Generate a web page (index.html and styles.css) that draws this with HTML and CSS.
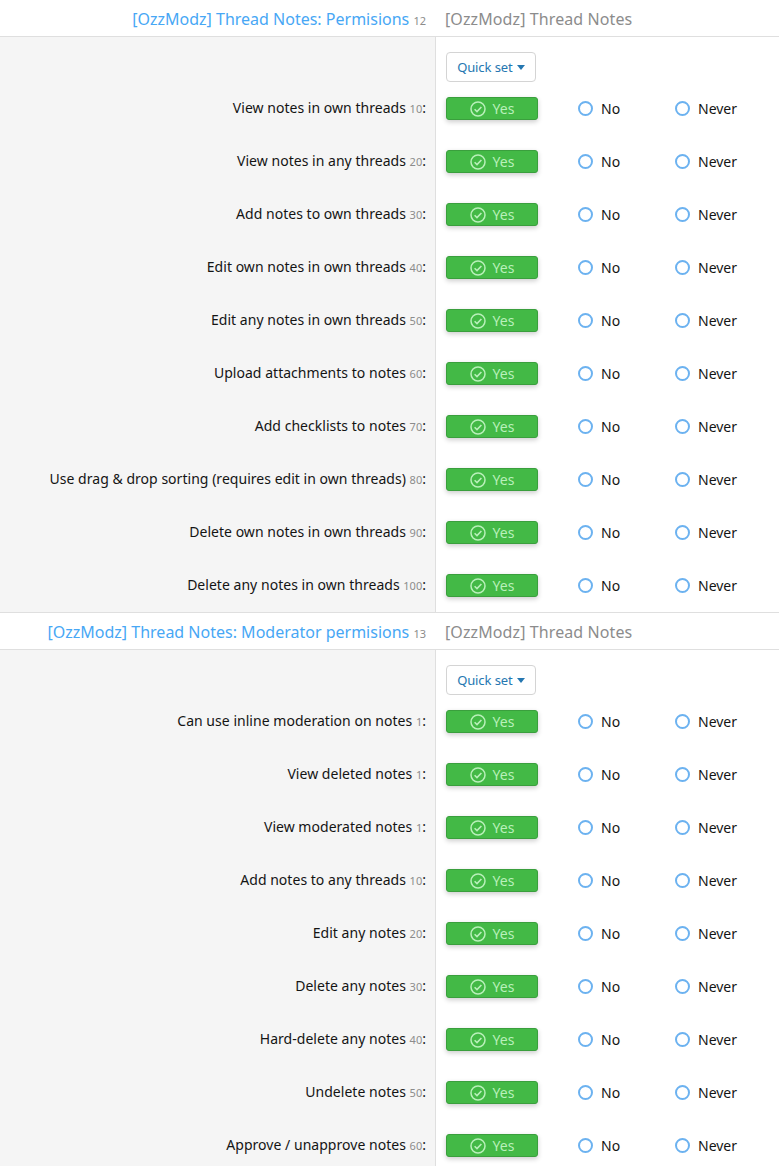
FILE: index.html
```html
<!DOCTYPE html>
<html lang="en">
<head>
<meta charset="UTF-8">
<title>Permissions</title>
<link rel="stylesheet" href="styles.css">
</head>
<body>
<svg class="sprite" width="0" height="0">
    <symbol id="check" viewBox="0 0 16 16">
        <circle cx="8" cy="8" r="7" fill="none" stroke="currentColor" stroke-width="1.5"/>
        <path d="M4.6 8.2l2.4 2.4 4.4-4.6" fill="none" stroke="currentColor" stroke-width="1.6"/>
    </symbol>
</svg>

<div class="head">
    <div class="head-title">[OzzModz] Thread Notes: Permisions <span class="count">12</span></div>
    <div class="head-addon">[OzzModz] Thread Notes</div>
</div>
<div class="section">
    <div class="quick-row"><div class="side"></div><div class="main"><button class="quick">Quick set <i class="caret"></i></button></div></div>
    <div class="row"><div class="side">View notes in own threads <span class="count">10</span>:</div><div class="main"><span class="yes"><svg class="check"><use href="#check"/></svg>Yes</span><span class="opt"><i class="radio"></i>No</span><span class="opt"><i class="radio"></i>Never</span></div></div>
    <div class="row"><div class="side">View notes in any threads <span class="count">20</span>:</div><div class="main"><span class="yes"><svg class="check"><use href="#check"/></svg>Yes</span><span class="opt"><i class="radio"></i>No</span><span class="opt"><i class="radio"></i>Never</span></div></div>
    <div class="row"><div class="side">Add notes to own threads <span class="count">30</span>:</div><div class="main"><span class="yes"><svg class="check"><use href="#check"/></svg>Yes</span><span class="opt"><i class="radio"></i>No</span><span class="opt"><i class="radio"></i>Never</span></div></div>
    <div class="row"><div class="side">Edit own notes in own threads <span class="count">40</span>:</div><div class="main"><span class="yes"><svg class="check"><use href="#check"/></svg>Yes</span><span class="opt"><i class="radio"></i>No</span><span class="opt"><i class="radio"></i>Never</span></div></div>
    <div class="row"><div class="side">Edit any notes in own threads <span class="count">50</span>:</div><div class="main"><span class="yes"><svg class="check"><use href="#check"/></svg>Yes</span><span class="opt"><i class="radio"></i>No</span><span class="opt"><i class="radio"></i>Never</span></div></div>
    <div class="row"><div class="side">Upload attachments to notes <span class="count">60</span>:</div><div class="main"><span class="yes"><svg class="check"><use href="#check"/></svg>Yes</span><span class="opt"><i class="radio"></i>No</span><span class="opt"><i class="radio"></i>Never</span></div></div>
    <div class="row"><div class="side">Add checklists to notes <span class="count">70</span>:</div><div class="main"><span class="yes"><svg class="check"><use href="#check"/></svg>Yes</span><span class="opt"><i class="radio"></i>No</span><span class="opt"><i class="radio"></i>Never</span></div></div>
    <div class="row"><div class="side">Use drag &amp; drop sorting (requires edit in own threads) <span class="count">80</span>:</div><div class="main"><span class="yes"><svg class="check"><use href="#check"/></svg>Yes</span><span class="opt"><i class="radio"></i>No</span><span class="opt"><i class="radio"></i>Never</span></div></div>
    <div class="row"><div class="side">Delete own notes in own threads <span class="count">90</span>:</div><div class="main"><span class="yes"><svg class="check"><use href="#check"/></svg>Yes</span><span class="opt"><i class="radio"></i>No</span><span class="opt"><i class="radio"></i>Never</span></div></div>
    <div class="row"><div class="side">Delete any notes in own threads <span class="count">100</span>:</div><div class="main"><span class="yes"><svg class="check"><use href="#check"/></svg>Yes</span><span class="opt"><i class="radio"></i>No</span><span class="opt"><i class="radio"></i>Never</span></div></div>
</div>

<div class="head head-next">
    <div class="head-title">[OzzModz] Thread Notes: Moderator permisions <span class="count">13</span></div>
    <div class="head-addon">[OzzModz] Thread Notes</div>
</div>
<div class="section">
    <div class="quick-row"><div class="side"></div><div class="main"><button class="quick">Quick set <i class="caret"></i></button></div></div>
    <div class="row"><div class="side">Can use inline moderation on notes <span class="count">1</span>:</div><div class="main"><span class="yes"><svg class="check"><use href="#check"/></svg>Yes</span><span class="opt"><i class="radio"></i>No</span><span class="opt"><i class="radio"></i>Never</span></div></div>
    <div class="row"><div class="side">View deleted notes <span class="count">1</span>:</div><div class="main"><span class="yes"><svg class="check"><use href="#check"/></svg>Yes</span><span class="opt"><i class="radio"></i>No</span><span class="opt"><i class="radio"></i>Never</span></div></div>
    <div class="row"><div class="side">View moderated notes <span class="count">1</span>:</div><div class="main"><span class="yes"><svg class="check"><use href="#check"/></svg>Yes</span><span class="opt"><i class="radio"></i>No</span><span class="opt"><i class="radio"></i>Never</span></div></div>
    <div class="row"><div class="side">Add notes to any threads <span class="count">10</span>:</div><div class="main"><span class="yes"><svg class="check"><use href="#check"/></svg>Yes</span><span class="opt"><i class="radio"></i>No</span><span class="opt"><i class="radio"></i>Never</span></div></div>
    <div class="row"><div class="side">Edit any notes <span class="count">20</span>:</div><div class="main"><span class="yes"><svg class="check"><use href="#check"/></svg>Yes</span><span class="opt"><i class="radio"></i>No</span><span class="opt"><i class="radio"></i>Never</span></div></div>
    <div class="row"><div class="side">Delete any notes <span class="count">30</span>:</div><div class="main"><span class="yes"><svg class="check"><use href="#check"/></svg>Yes</span><span class="opt"><i class="radio"></i>No</span><span class="opt"><i class="radio"></i>Never</span></div></div>
    <div class="row"><div class="side">Hard-delete any notes <span class="count">40</span>:</div><div class="main"><span class="yes"><svg class="check"><use href="#check"/></svg>Yes</span><span class="opt"><i class="radio"></i>No</span><span class="opt"><i class="radio"></i>Never</span></div></div>
    <div class="row"><div class="side">Undelete notes <span class="count">50</span>:</div><div class="main"><span class="yes"><svg class="check"><use href="#check"/></svg>Yes</span><span class="opt"><i class="radio"></i>No</span><span class="opt"><i class="radio"></i>Never</span></div></div>
    <div class="row"><div class="side">Approve / unapprove notes <span class="count">60</span>:</div><div class="main"><span class="yes"><svg class="check"><use href="#check"/></svg>Yes</span><span class="opt"><i class="radio"></i>No</span><span class="opt"><i class="radio"></i>Never</span></div></div>
</div>
</body>
</html>
```
FILE: styles.css
```css
html, body {
    height: 1166px;
    overflow: hidden;
}

body {
    margin: 0;
    background-color: #fff;
    color: #141414;
    font-family: "Noto Sans", "Open Sans", sans-serif;
    font-size: 14px;
}

.sprite {
    display: block;
    height: 0;
}

.head {
    display: grid;
    grid-template-columns: 436px 1fr;
    height: 34px;
    padding-top: 2px;
    align-items: center;
    border-bottom: 1px solid #dfdfdf;
    font-size: 16px;
}

.head-next {
    border-top: 1px solid #dfdfdf;
}

.head-title {
    color: #47a7f5;
    text-align: right;
    padding-right: 10px;
}

.head-addon {
    color: #8c8c8c;
    padding-left: 9px;
    letter-spacing: 0.1px;
}

.count {
    color: #8c8c8c;
    font-size: 11px;
    letter-spacing: 0;
}

.section {
    padding: 15px 0;
    background: linear-gradient(to right, #f5f5f5 435px, #dfdfdf 435px, #dfdfdf 436px, #fff 436px);
}

.quick-row,
.row {
    display: grid;
    grid-template-columns: 436px 1fr;
}

.quick-row {
    margin-bottom: 15px;
}

.row {
    height: 23px;
    margin-bottom: 30px;
    align-items: center;
}

.row:last-child {
    margin-bottom: 0;
}

.side {
    text-align: right;
    padding-right: 10px;
    line-height: 20px;
    letter-spacing: 0.03px;
}

.main {
    display: flex;
    align-items: center;
    padding-left: 10px;
}

.quick {
    width: 90px;
    height: 30px;
    padding: 0;
    background-color: #fff;
    border: 1px solid #d4d4d4;
    border-radius: 4px;
    color: #2577b1;
    font-family: inherit;
    font-size: 13px;
    letter-spacing: -0.1px;
}

.caret {
    display: inline-block;
    width: 0;
    height: 0;
    margin-left: 1px;
    vertical-align: 2px;
    border-left: 4px solid transparent;
    border-right: 4px solid transparent;
    border-top: 5px solid #2577b1;
}

.yes {
    display: flex;
    align-items: center;
    justify-content: center;
    box-sizing: border-box;
    width: 92px;
    height: 23px;
    margin-right: 40px;
    background-color: #43b946;
    border: 1px solid #3a9f3d;
    border-radius: 3px;
    box-shadow: 0 2px 5px rgba(0,0,0,0.2);
    color: #b9f0ba;
}

.check {
    width: 16px;
    height: 16px;
    margin-right: 7px;
}

.opt {
    display: flex;
    align-items: center;
    width: 97px;
}

.radio {
    box-sizing: border-box;
    width: 15px;
    height: 15px;
    margin-right: 8px;
    border: 2px solid #6cb2f0;
    border-radius: 50%;
    background-color: #fff;
}
```
